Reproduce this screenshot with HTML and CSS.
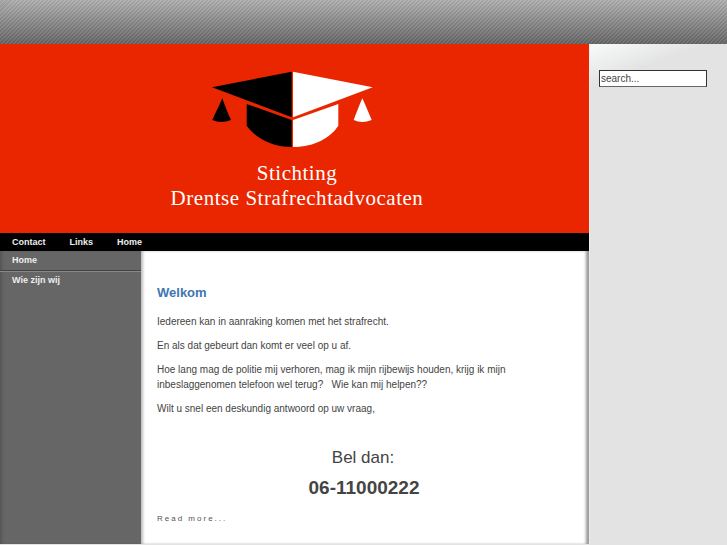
FILE: index.html
```html
<!DOCTYPE html>
<html lang="en">
<head>
    <meta charset="UTF-8">
    <meta name="viewport" content="width=device-width, initial-scale=1.0">
    <title>Stichting Drentse Strafrechtadvocaten</title>
    <link rel="stylesheet" href="styles.css">
</head>
<body>
    <div class="topbar"></div>
    <div class="wrapper">
        <div class="main">
            <div class="banner">
                <svg class="logo" width="164" height="80" viewBox="0 0 164 80">
                    <path d="M1 16.3L80.7 .7V46.3Z" fill="#000"/>
                    <path d="M82 .7L161.7 16.3 82 46.3Z" fill="#fff"/>
                    <path d="M35.7 33V54.7C42 64 58 76 80.7 76V49Z" fill="#000"/>
                    <path d="M82 49V76C104 76 120 66 127.3 54.7V33Z" fill="#fff"/>
                    <path d="M11.3 27.3C8 35 4 43 1.3 49Q10 53 20 49C17 43 14 35 11.3 27.3Z" fill="#000"/>
                    <path d="M151.3 27.3C148 35 145 43 142.7 49Q151 53 160.7 49C158 43 155 35 151.3 27.3Z" fill="#fff"/>
                </svg>
                <div class="banner-title">Stichting<br>Drentse Strafrechtadvocaten</div>
            </div>
            <div class="topnav">
                <a href="#">Contact</a>
                <a href="#">Links</a>
                <a href="#">Home</a>
            </div>
            <div class="columns">
                <div class="sidemenu">
                    <a href="#" class="active">Home</a>
                    <a href="#">Wie zijn wij</a>
                </div>
                <div class="content">
                    <h2>Welkom</h2>
                    <p>Iedereen kan in aanraking komen met het strafrecht.</p>
                    <p>En als dat gebeurt dan komt er veel op u af.</p>
                    <p>Hoe lang mag de politie mij verhoren, mag ik mijn rijbewijs houden, krijg ik mijn inbeslaggenomen telefoon wel terug?&nbsp;&nbsp; Wie kan mij helpen??</p>
                    <p>Wilt u snel een deskundig antwoord op uw vraag,</p>
                    <div class="call">Bel dan:</div>
                    <div class="phone">06-11000222</div>
                    <a href="#" class="readmore">Read more...</a>
                </div>
            </div>
        </div>
        <div class="right">
            <input class="search" type="text" value="search...">
        </div>
    </div>
</body>
</html>
```

FILE: styles.css
```css
html, body {
    height: 100%;
}

body {
    font-family: "Liberation Sans", Arial, sans-serif;
    background-color: #e3e3e3;
    margin: 0;
    padding: 0;
    overflow: hidden;
}

.topbar {
    height: 44px;
    background-color: #888;
    background-image:
        repeating-linear-gradient(135deg, rgba(255, 255, 255, 0.07) 0, rgba(255, 255, 255, 0.07) 1.41px, rgba(0, 0, 0, 0.07) 1.41px, rgba(0, 0, 0, 0.07) 2.83px),
        linear-gradient(#b0b0b0, #666);
}

.wrapper {
    display: flex;
    height: 500px;
}

.main {
    width: 589px;
    display: flex;
    flex-direction: column;
}

.banner {
    height: 189px;
    background-color: #ea2600;
    text-align: center;
    color: #fff;
    padding-top: 27px;
    box-sizing: border-box;
}

.logo {
    display: block;
    margin-left: 211px;
}

.banner-title {
    font-family: "Liberation Serif", serif;
    font-size: 21px;
    line-height: 25px;
    margin-top: 10px;
    padding-left: 5px;
    letter-spacing: 0.53px;
}

.topnav {
    height: 18px;
    background-color: #000;
    display: flex;
    gap: 24px;
    padding-left: 12px;
    align-items: center;
}

.topnav a {
    color: #eee;
    font-size: 9px;
    font-weight: bold;
    text-decoration: none;
}

.columns {
    flex: 1;
    display: flex;
    min-height: 0;
}

.sidemenu {
    width: 141px;
    background-color: #666;
    box-sizing: border-box;
    box-shadow: inset 3px 0 3px -1px #555;
}

.sidemenu a {
    display: block;
    color: #eee;
    font-size: 9px;
    font-weight: bold;
    text-decoration: none;
    padding-left: 12px;
    height: 20px;
    line-height: 16px;
}

.sidemenu .active {
    height: 21px;
    line-height: 18px;
    border-bottom: 1px solid #888;
    box-shadow: inset 0 -1px 0 #444;
    box-sizing: border-box;
}

.content {
    flex: 1;
    background-color: #fff;
    padding: 34px 20px 0 16px;
    color: #444;
    font-size: 10px;
    line-height: 15px;
    box-shadow: inset -4px 0 3px -1px #999, inset 3px 0 3px -1px #bbb;
}

.content h2 {
    color: #3f75b0;
    font-size: 13px;
    line-height: 15px;
    margin: 0 0 14px;
}

.content p {
    margin: 0 0 9px;
}

.call {
    text-align: center;
    font-size: 17px;
    line-height: 20px;
    margin-top: 32px;
}

.phone {
    text-align: center;
    font-size: 19px;
    font-weight: bold;
    line-height: 24px;
    margin-top: 8px;
    padding-left: 2px;
}

.readmore {
    display: block;
    margin-top: 11px;
    color: #555;
    font-size: 8px;
    letter-spacing: 2px;
    text-decoration: none;
}

.right {
    flex: 1;
    background-image: linear-gradient(160deg, #f8fbfb 0, #e3e3e3 40px);
    background-repeat: no-repeat;
    border-left: 1px solid #eee;
    padding: 26px 0 0 9px;
}

.search {
    display: block;
    width: 108px;
    height: 17px;
    box-sizing: border-box;
    border: 1px solid #333;
    border-bottom-color: #666;
    padding: 0 1px;
    font-family: "Liberation Sans", Arial, sans-serif;
    font-size: 10px;
    color: #444;
    background-color: #fff;
}
```
